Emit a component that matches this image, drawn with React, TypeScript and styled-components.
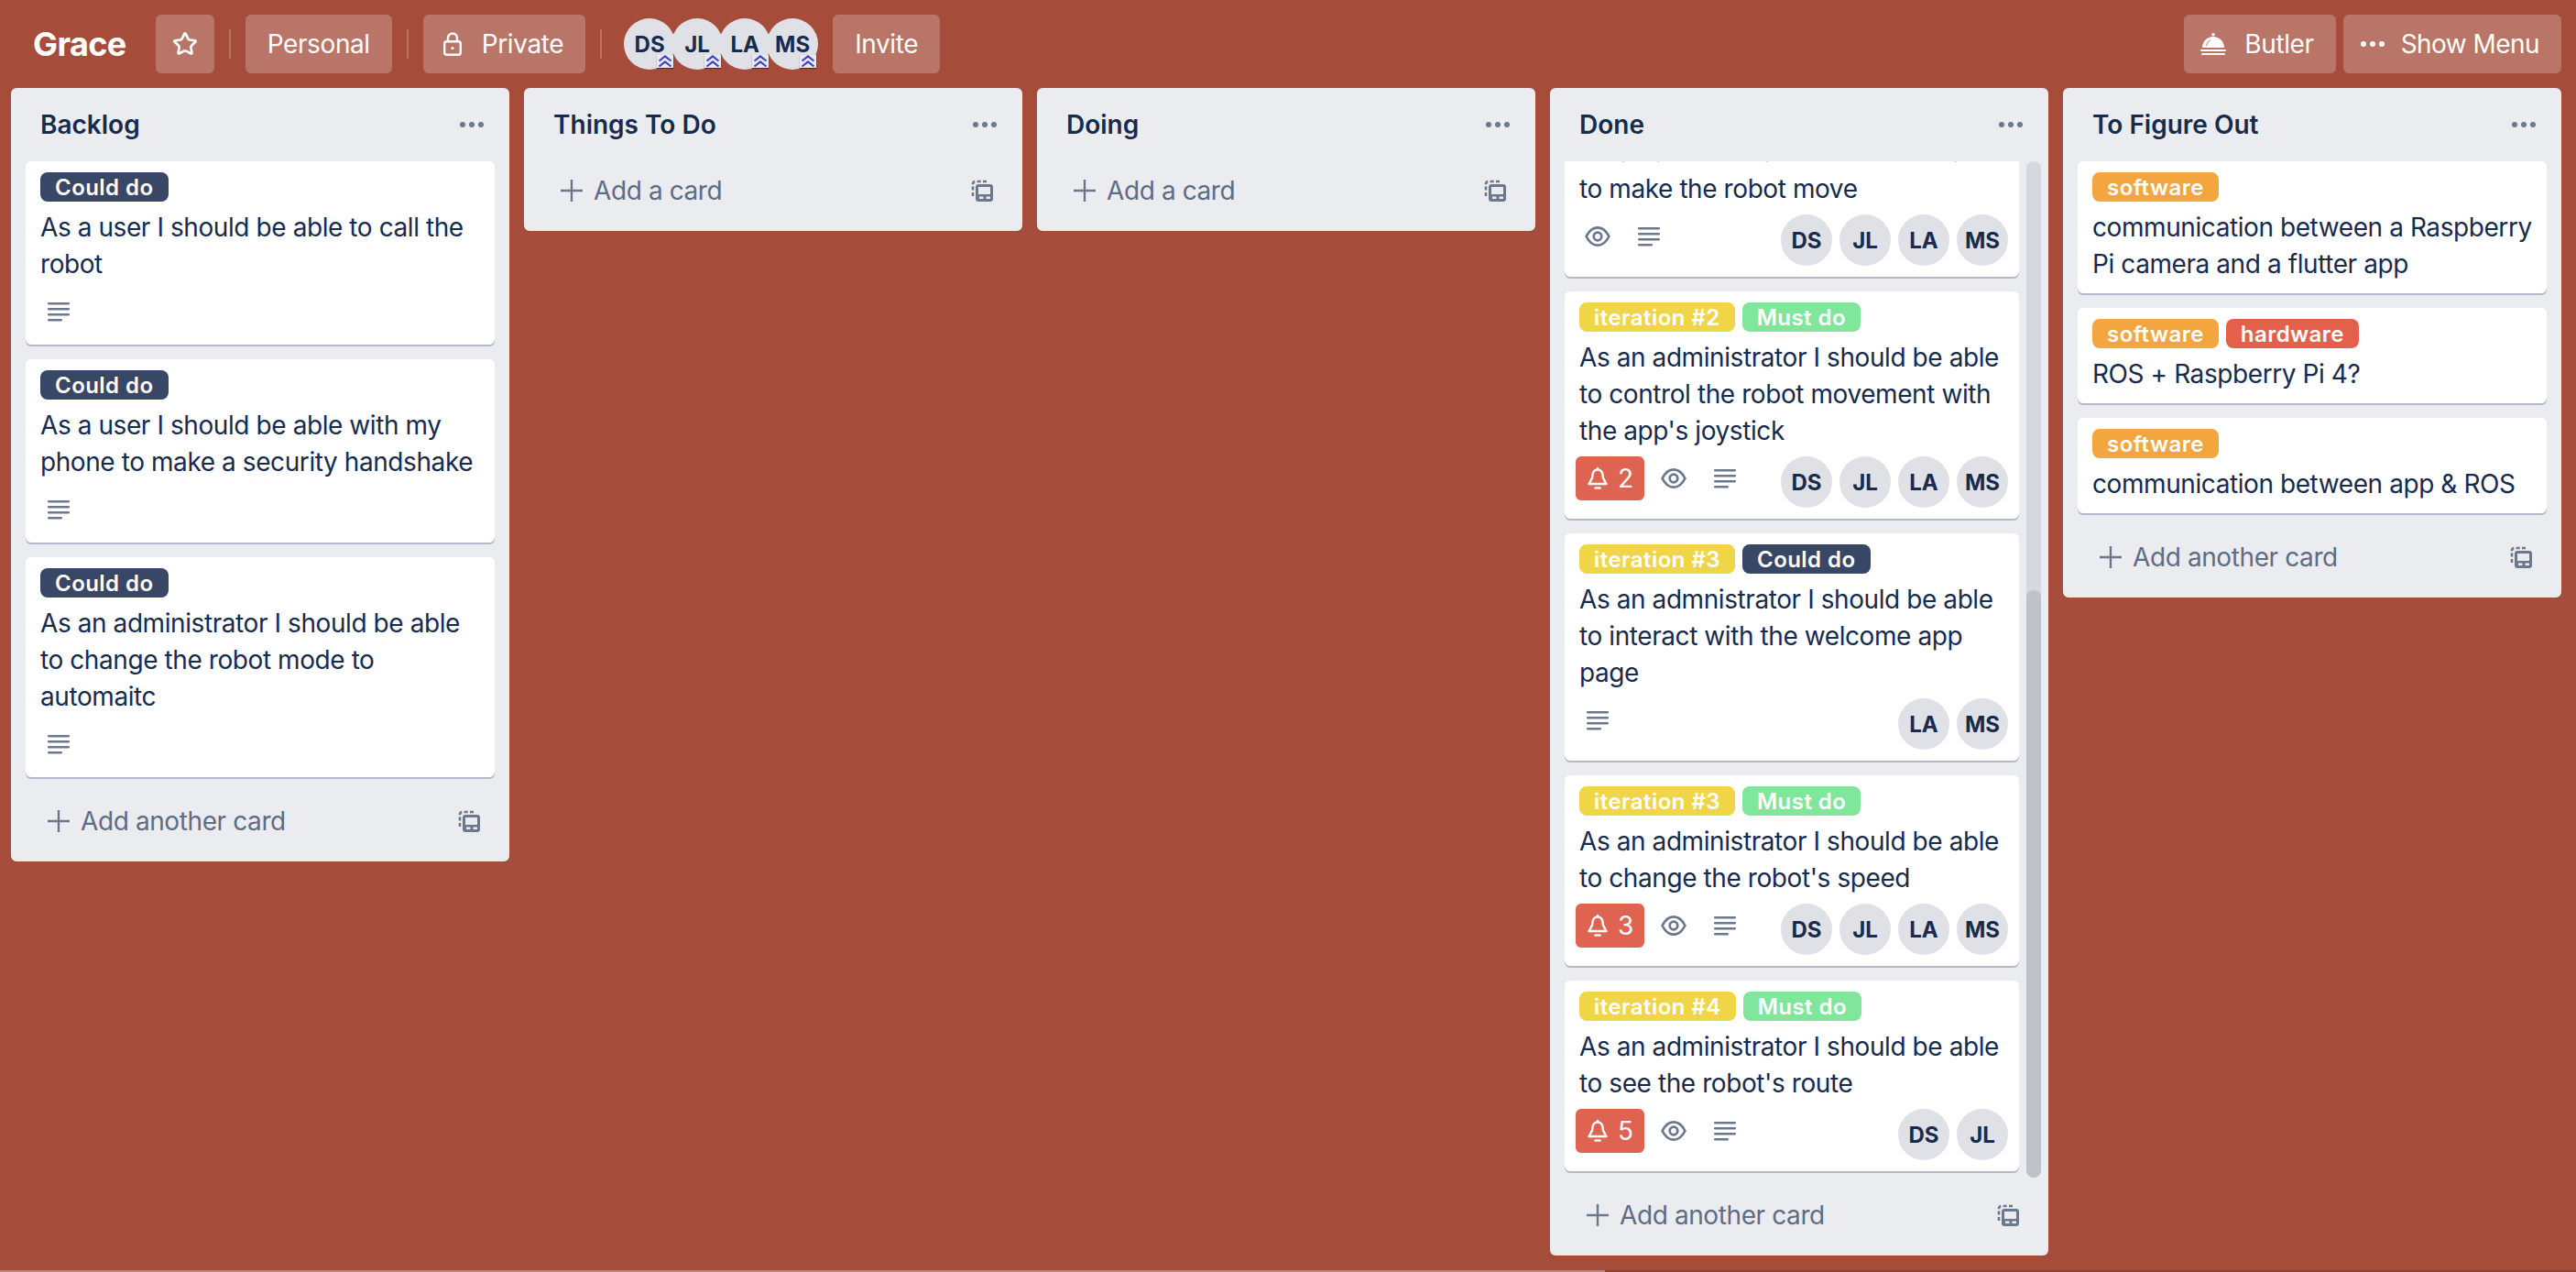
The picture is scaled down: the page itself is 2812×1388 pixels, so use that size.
import React, { useLayoutEffect, useRef, useState } from "react";
import styled, { createGlobalStyle } from "styled-components";
import { Star } from "lucide-react";

const GlobalStyle = createGlobalStyle`
  html, body {
    margin: 0;
    padding: 0;
    height: 100%;
    overflow: hidden;
    background: #a54c3a;
    font-family: Inter, "Liberation Sans", sans-serif;
    color: #172b4d;
  }
  * { box-sizing: border-box; }
`;

const colors = {
  navy: "#384765",
  orange: "#f3a53f",
  red: "#e5604c",
  yellow: "#f0d646",
  green: "#7fe69c",
};

type LabelData = { text: string; color: string };
type CardData = {
  labels: LabelData[];
  text: string;
  notify?: number;
  watched?: boolean;
  description?: boolean;
  members?: string[];
};
type ListData = { title: string; addText: string; scrolled?: boolean; cards: CardData[] };

const all = ["DS", "JL", "LA", "MS"];
const could = { text: "Could do", color: colors.navy };
const must = { text: "Must do", color: colors.green };
const software = { text: "software", color: colors.orange };
const hardware = { text: "hardware", color: colors.red };
const iteration = (n: number) => ({ text: `iteration #${n}`, color: colors.yellow });

const lists: ListData[] = [
  {
    title: "Backlog",
    addText: "Add another card",
    cards: [
      { labels: [could], text: "As a user I should be able to call the robot", description: true },
      { labels: [could], text: "As a user I should be able with my phone to make a security handshake", description: true },
      { labels: [could], text: "As an administrator I should be able to change the robot mode to automaitc", description: true },
    ],
  },
  { title: "Things To Do", addText: "Add a card", cards: [] },
  { title: "Doing", addText: "Add a card", cards: [] },
  {
    title: "Done",
    addText: "Add another card",
    scrolled: true,
    cards: [
      { labels: [iteration(1), must], text: "As a user I should be able to open the app", description: true },
      { labels: [iteration(1), must], text: "As an administrator I should be able to connect the app with the robot's onboard controller", description: true },
      { labels: [iteration(1), must], text: "As an administrator I should be able to see the status of the robot on the app's main page", description: true },
      { labels: [iteration(2), must], text: "As an administrator I should be able to make the robot move", watched: true, description: true, members: all },
      { labels: [iteration(2), must], text: "As an administrator I should be able to control the robot movement with the app's joystick", notify: 2, watched: true, description: true, members: all },
      { labels: [iteration(3), could], text: "As an admnistrator I should be able to interact with the welcome app page", description: true, members: ["LA", "MS"] },
      { labels: [iteration(3), must], text: "As an administrator I should be able to change the robot's speed", notify: 3, watched: true, description: true, members: all },
      { labels: [iteration(4), must], text: "As an administrator I should be able to see the robot's route", notify: 5, watched: true, description: true, members: ["DS", "JL"] },
    ],
  },
  {
    title: "To Figure Out",
    addText: "Add another card",
    cards: [
      { labels: [software], text: "communication between a Raspberry Pi camera and a flutter app" },
      { labels: [software, hardware], text: "ROS + Raspberry Pi 4?" },
      { labels: [software], text: "communication between app & ROS" },
    ],
  },
];

const Page = styled.div`
  position: relative;
  width: 2812px;
  height: 1388px;
  overflow: hidden;
  background: #a54c3a;
`;

const Header = styled.header`
  height: 96px;
  padding: 16px 16px 16px 36px;
  display: flex;
  align-items: flex-start;
`;

const BoardName = styled.h1`
  margin: 0 32px 0 0;
  font-size: 36px;
  line-height: 64px;
  font-weight: 700;
  letter-spacing: -0.6px;
  color: #fff;
`;

const HeaderButton = styled.div<{ $lead?: number; $gap?: number; $right?: boolean }>`
  height: 64px;
  padding: 0 24px 0 ${(p) => p.$lead ?? 24}px;
  display: flex;
  align-items: center;
  gap: ${(p) => p.$gap ?? 20}px;
  border-radius: 6px;
  background: rgba(255, 255, 255, 0.23);
  color: #fff;
  font-size: 28px;
  letter-spacing: ${(p) => (p.$right ? "-0.55px" : "-0.4px")};
  white-space: nowrap;
  margin-left: ${(p) => (p.$right ? "8px" : "0")};
`;

const Divider = styled.span`
  width: 2px;
  height: 32px;
  margin: 16px;
  background: rgba(255, 255, 255, 0.22);
`;

const Members = styled.div`
  display: flex;
  margin: 4px 16px 0 8px;
`;

const Avatar = styled.div`
  position: relative;
  width: 56px;
  height: 56px;
  flex: none;
  border-radius: 50%;
  background: #dfe1e6;
  color: #172b4d;
  font-size: 24px;
  font-weight: 700;
  display: flex;
  align-items: center;
  justify-content: center;
`;

const HeaderAvatar = styled(Avatar)`
  & + & {
    margin-left: -4px;
  }
`;

const AdminBadge = styled.div`
  position: absolute;
  right: 2px;
  bottom: 2px;
  width: 18px;
  height: 14px;
  background: #e9eaf0;
  box-shadow: 0 1px 1px rgba(60, 20, 10, 0.6);
  display: flex;
  align-items: center;
  justify-content: center;
`;

const Spacer = styled.div`
  flex: 1;
`;

const Board = styled.main`
  display: flex;
  align-items: flex-start;
  gap: 16px;
  padding: 0 12px;
`;

const List = styled.section`
  width: 544px;
  flex: none;
  max-height: 1274px;
  display: flex;
  flex-direction: column;
  border-radius: 6px;
  background: #ebecf0;
`;

const ListHeader = styled.div`
  flex: none;
  height: 64px;
  padding: 16px 28px 0 32px;
  display: flex;
  align-items: center;
  justify-content: space-between;
`;

const ListTitle = styled.h2`
  margin: 0;
  font-size: 28px;
  font-weight: 600;
  color: #172b4d;
`;

const CardsFrame = styled.div<{ $scrolled?: boolean }>`
  position: relative;
  flex: 1 1 auto;
  min-height: 0;
  margin: 16px ${(p) => (p.$scrolled ? "8px" : "16px")} -7px 16px;
  display: flex;
  flex-direction: column;
`;

const CardScroller = styled.div<{ $scrolled?: boolean }>`
  flex: 1 1 auto;
  min-height: 0;
  padding: 0 ${(p) => (p.$scrolled ? "24px" : "0")} 7px 0;
  display: flex;
  flex-direction: column;
  gap: 16px;
  overflow-y: ${(p) => (p.$scrolled ? "scroll" : "hidden")};
  scrollbar-width: none;
`;

const ScrollTrack = styled.div`
  position: absolute;
  top: 0;
  right: 0;
  bottom: 0;
  width: 16px;
  border-radius: 8px;
  background: #d6d8e0;
`;

const ScrollThumb = styled.div`
  position: absolute;
  left: 0;
  right: 0;
  bottom: 0;
  border-radius: 8px;
  background: #bdc2cb;
`;

const CardBox = styled.article`
  flex: none;
  padding: 12px 12px 12px 16px;
  border-radius: 6px;
  background: #fff;
  box-shadow: 0 2px 0 #b3b9c8;
`;

const Labels = styled.div`
  display: flex;
  gap: 8px;
`;

const Label = styled.span<{ $color: string }>`
  height: 32px;
  padding: 0 16px;
  display: flex;
  align-items: center;
  border-radius: 8px;
  background: ${(p) => p.$color};
  color: #fff;
  font-size: 24px;
  font-weight: 600;
  letter-spacing: 0.45px;
`;

const CardText = styled.p`
  margin: 8px 0 0;
  font-size: 28px;
  line-height: 40px;
  letter-spacing: -0.42px;
  color: #172b4d;
`;

const CardMeta = styled.div`
  margin-top: 8px;
  display: flex;
  align-items: flex-start;
  justify-content: space-between;
`;

const MetaIcons = styled.div`
  display: flex;
  gap: 16px;
`;

const MetaIcon = styled.div`
  width: 40px;
  height: 48px;
  display: flex;
  align-items: center;
  justify-content: center;
`;

const NotifyBadge = styled.div`
  width: 75px;
  height: 48px;
  margin: 0 -4px 0 -4px;
  padding-left: 13px;
  display: flex;
  align-items: center;
  gap: 11px;
  border-radius: 6px;
  background: #de6350;
  color: #fff;
  font-size: 28px;
`;

const CardMembers = styled.div`
  display: flex;
  gap: 8px;
`;

const ListFooter = styled.div`
  flex: none;
  height: 92px;
  padding: 4px 32px 0 40px;
  display: flex;
  align-items: center;
  color: #5e6c84;
  font-size: 28px;
  letter-spacing: -0.4px;
`;

const AddText = styled.span`
  flex: 1;
  margin-left: 12px;
`;

const PageScrollbar = styled.div`
  position: absolute;
  left: 0;
  right: 0;
  bottom: 0;
  height: 2px;
  background: #8c3f2f;
`;

const PageScrollThumb = styled.div`
  width: 1752px;
  height: 100%;
  background: #b8877c;
`;

const Dots = ({ color }: { color: string }) => (
  <svg width="26" height="6" viewBox="0 0 26 6" fill={color}>
    <circle cx="3" cy="3" r="3" />
    <circle cx="13" cy="3" r="3" />
    <circle cx="23" cy="3" r="3" />
  </svg>
);

const LockIcon = () => (
  <svg width="20" height="26" viewBox="0 0 20 26" fill="none" stroke="#fff" strokeWidth="2.4">
    <rect x="1.2" y="10.2" width="17.6" height="14.6" rx="2.5" />
    <path d="M5 10V6.5a5 5 0 0 1 10 0V10" />
    <circle cx="10" cy="17.5" r="1.6" fill="#fff" stroke="none" />
  </svg>
);

const ButlerIcon = () => (
  <svg width="28" height="24" viewBox="0 0 28 24" fill="#fff">
    <circle cx="14" cy="1.8" r="1.8" />
    <path d="M2 16a12 12 0 0 1 24 0z" />
    <path d="M6.5 14a8 8 0 0 1 4.5-6.4" fill="none" stroke="#b97666" strokeWidth="1" />
    <rect x="0" y="18" width="28" height="2" rx="1" />
    <rect x="1" y="22" width="26" height="2" rx="1" />
  </svg>
);

const ChevronsIcon = () => (
  <svg width="16" height="14" viewBox="0 0 16 14" fill="none" stroke="#3f41c4" strokeWidth="2.2">
    <path d="M1.5 6.500 8 1.500l6.500 5" />
    <path d="M1.500 12.500 8 7.500l6.500 5" />
  </svg>
);

const PlusIcon = () => (
  <svg width="24" height="24" viewBox="0 0 24 24" stroke="#6b778c" strokeWidth="2.4">
    <path d="M12 0v24M0 12h24" />
  </svg>
);

const TemplateIcon = () => (
  <svg width="24" height="24" viewBox="0 0 24 24" fill="none">
    <path d="M2 18V5a3 3 0 0 1 3-3h14" stroke="#6b778c" strokeWidth="2.6" strokeDasharray="4 2.4" />
    <path
      fillRule="evenodd"
      fill="#6b778c"
      d="M8 5h13a3 3 0 0 1 3 3v13a3 3 0 0 1-3 3H8a3 3 0 0 1-3-3V8a3 3 0 0 1 3-3zm0 3v8h13V8zm1 10.500v2.500h4.500v-2.500zm7.500 0v2.500H21v-2.500z"
    />
  </svg>
);

const DescriptionIcon = () => (
  <svg width="24" height="22" viewBox="0 0 24 22" fill="#6b778c">
    <rect y="1" width="24" height="2.6" rx="1.300" />
    <rect y="7" width="24" height="2.6" rx="1.300" />
    <rect y="13" width="24" height="2.600" rx="1.300" />
    <rect y="19" width="16" height="2.600" rx="1.300" />
  </svg>
);

const EyeIcon = () => (
  <svg width="28" height="24" viewBox="0 0 26 22" fill="none" stroke="#6b778c" strokeWidth="2.5">
    <path d="M1.500 11C4.500 5 8.500 2 13 2s8.500 3 11.500 9C21.500 17 17.500 20 13 20S4.500 17 1.500 11z" />
    <circle cx="13" cy="11" r="4" />
  </svg>
);

const BellIcon = () => (
  <svg width="22" height="26" viewBox="0 0 22 26" fill="none" stroke="#fff" strokeWidth="2.500" strokeLinejoin="round">
    <path d="M11 1v2.500" />
    <path d="M3.500 15.500C5 13.500 5.500 12 5.500 9a5.500 5.500 0 0 1 11 0c0 3 .5 4.500 2 6.500l2 3.500H1.500z" />
    <path d="M8.500 23.500h5" strokeWidth="2.600" strokeLinecap="round" />
  </svg>
);

const Card = ({ card }: { card: CardData }) => {
  const hasMeta = card.notify || card.watched || card.description || card.members;
  return (
    <CardBox>
      <Labels>
        {card.labels.map((label) => (
          <Label key={label.text} $color={label.color}>
            {label.text}
          </Label>
        ))}
      </Labels>
      <CardText>{card.text}</CardText>
      {hasMeta && (
        <CardMeta>
          <MetaIcons>
            {card.notify && (
              <NotifyBadge>
                <BellIcon />
                {card.notify}
              </NotifyBadge>
            )}
            {card.watched && (
              <MetaIcon>
                <EyeIcon />
              </MetaIcon>
            )}
            {card.description && (
              <MetaIcon>
                <DescriptionIcon />
              </MetaIcon>
            )}
          </MetaIcons>
          {card.members && (
            <CardMembers>
              {card.members.map((member) => (
                <Avatar key={member}>{member}</Avatar>
              ))}
            </CardMembers>
          )}
        </CardMeta>
      )}
    </CardBox>
  );
};

const BoardList = ({ list }: { list: ListData }) => {
  const scroller = useRef<HTMLDivElement>(null);
  const [thumbHeight, setThumbHeight] = useState(0);

  // the list sits scrolled to its end, the thumb follows from the content height
  useLayoutEffect(() => {
    const el = scroller.current;
    if (list.scrolled && el) {
      el.scrollTop = el.scrollHeight;
      setThumbHeight((el.clientHeight * el.clientHeight) / el.scrollHeight);
    }
  }, [list.scrolled]);

  return (
    <List>
      <ListHeader>
        <ListTitle>{list.title}</ListTitle>
        <Dots color="#6b778c" />
      </ListHeader>
      {list.cards.length > 0 && (
        <CardsFrame $scrolled={list.scrolled}>
          <CardScroller ref={scroller} $scrolled={list.scrolled}>
            {list.cards.map((card, i) => (
              <Card key={i} card={card} />
            ))}
          </CardScroller>
          {list.scrolled && (
            <ScrollTrack>
              <ScrollThumb style={{ height: thumbHeight }} />
            </ScrollTrack>
          )}
        </CardsFrame>
      )}
      <ListFooter>
        <PlusIcon />
        <AddText>{list.addText}</AddText>
        <TemplateIcon />
      </ListFooter>
    </List>
  );
};

export default function App() {
  return (
    <Page>
      <GlobalStyle />
      <Header>
        <BoardName>Grace</BoardName>
        <HeaderButton $lead={18}>
          <Star size={28} strokeWidth={2.3} style={{ marginRight: -6 }} />
        </HeaderButton>
        <Divider />
        <HeaderButton>Personal</HeaderButton>
        <Divider />
        <HeaderButton $lead={22} $gap={22}>
          <LockIcon />
          Private
        </HeaderButton>
        <Divider />
        <Members>
          {all.map((member) => (
            <HeaderAvatar key={member}>
              {member}
              <AdminBadge>
                <ChevronsIcon />
              </AdminBadge>
            </HeaderAvatar>
          ))}
        </Members>
        <HeaderButton>Invite</HeaderButton>
        <Spacer />
        <HeaderButton $lead={18}>
          <ButlerIcon />
          Butler
        </HeaderButton>
        <HeaderButton $lead={19} $gap={18} $right>
          <Dots color="#fff" />
          Show Menu
        </HeaderButton>
      </Header>
      <Board>
        {lists.map((list) => (
          <BoardList key={list.title} list={list} />
        ))}
      </Board>
      <PageScrollbar>
        <PageScrollThumb />
      </PageScrollbar>
    </Page>
  );
}
